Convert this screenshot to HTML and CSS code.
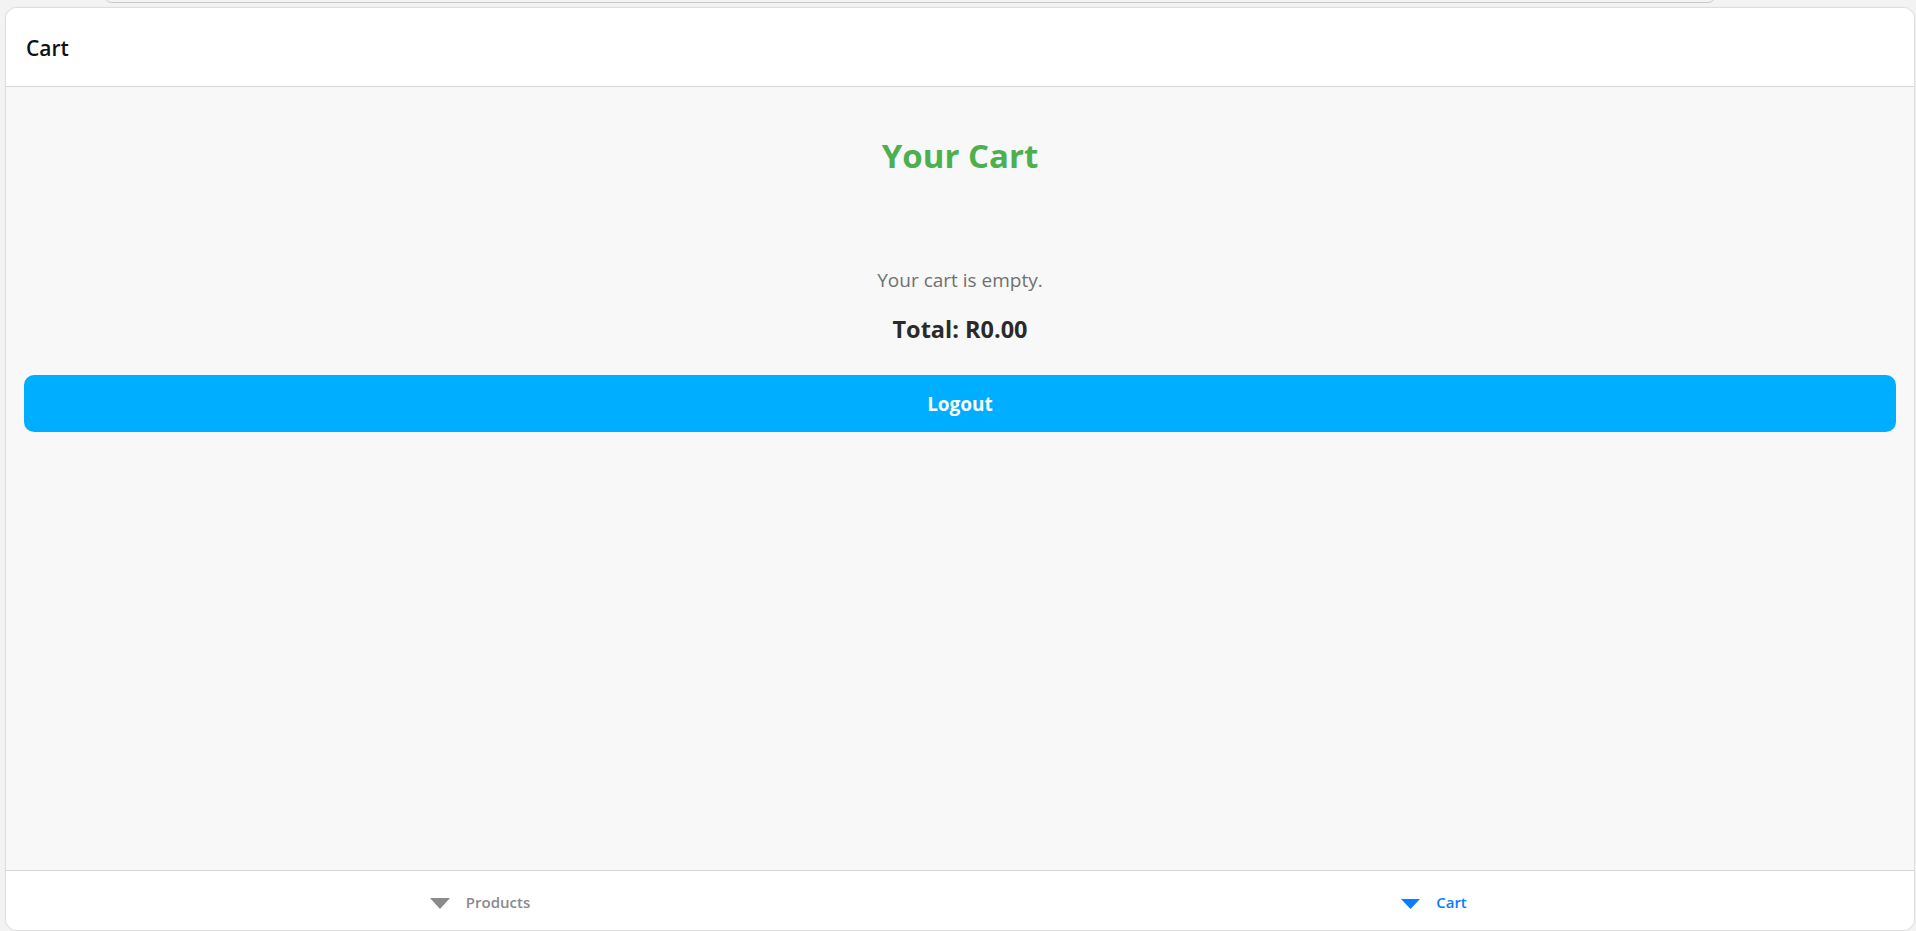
FILE: index.html
```html
<!DOCTYPE html>
<html lang="en">
<head>
<meta charset="utf-8">
<title>Cart</title>
<link rel="stylesheet" href="styles.css">
</head>
<body>
<div class="peek"></div>
<div class="app">
  <header class="toolbar">
    <div class="toolbar-title">Cart</div>
  </header>
  <main class="content">
    <h1 class="cart-title">Your Cart</h1>
    <p class="empty">Your cart is empty.</p>
    <h3 class="total">Total: R0.00</h3>
    <button class="logout">Logout</button>
  </main>
  <nav class="tabbar">
    <div class="tab">
      <svg class="tab-icon" width="20" height="11" viewBox="0 0 20 11"><polygon points="0,0 20,0 10,11" fill="currentColor"/></svg>
      <span class="tab-label">Products</span>
    </div>
    <div class="tab tab-active">
      <svg class="tab-icon" width="19" height="10" viewBox="0 0 19 10"><polygon points="0,0 19,0 9.5,10" fill="currentColor"/></svg>
      <span class="tab-label">Cart</span>
    </div>
  </nav>
</div>
</body>
</html>
```

FILE: styles.css
```css
* { box-sizing: border-box; }
html, body { margin: 0; padding: 0; }
body {
  background: #f3f3f3;
  font-family: "Open Sans", "Noto Sans", sans-serif;
  height: 931px;
  overflow: hidden;
  position: relative;
  padding: 7px 1px 0 5px;
}
.peek {
  position: absolute;
  left: 105px;
  top: -10px;
  width: 1610px;
  height: 13px;
  border: 1px solid #c9c9c9;
  border-radius: 8px;
  background: #f3f3f3;
}
.app {
  height: 924px;
  border: 1px solid #dedede;
  border-radius: 12px;
  background: #f8f8f8;
  display: flex;
  flex-direction: column;
  overflow: hidden;
  box-shadow: 0 0 2px rgba(0,0,0,0.06);
}
.toolbar {
  height: 79px;
  flex: none;
  background: #fff;
  border-bottom: 1px solid #d6d6d6;
  display: flex;
  align-items: center;
  padding-left: 20px;
}
.toolbar-title {
  font-size: 21px;
  font-weight: 600;
  color: #111;
  margin-top: 2px;
}
.content {
  flex: 1;
  padding: 18px;
  text-align: center;
}
.cart-title {
  margin: 29px 0 0;
  font-size: 33px;
  line-height: 44px;
  font-weight: 700;
  color: #4caf50;
}
.empty {
  margin: 89px 0 0;
  font-size: 19px;
  line-height: 26px;
  color: #707070;
}
.total {
  margin: 20px 0 0;
  font-size: 23.5px;
  line-height: 32px;
  font-weight: 700;
  color: #2a2a2a;
}
.logout {
  display: block;
  width: 100%;
  height: 57px;
  margin-top: 30px;
  border: none;
  border-radius: 10px;
  background: #00aeff;
  color: #fff;
  font-family: inherit;
  font-size: 19px;
  font-weight: 700;
}
.tabbar {
  height: 60px;
  flex: none;
  background: #fff;
  border-top: 1px solid #d6d6d6;
  display: flex;
}
.tab {
  flex: 1;
  display: flex;
  align-items: center;
  justify-content: center;
  gap: 16px;
  color: #8a8a8a;
  padding-top: 2px;
  padding-right: 6px;
}
.tab-active { color: #0a7cff; }
.tab-icon { display: block; margin-top: 4px; }
.tab-label {
  font-size: 15px;
  font-weight: 600;
}
```
